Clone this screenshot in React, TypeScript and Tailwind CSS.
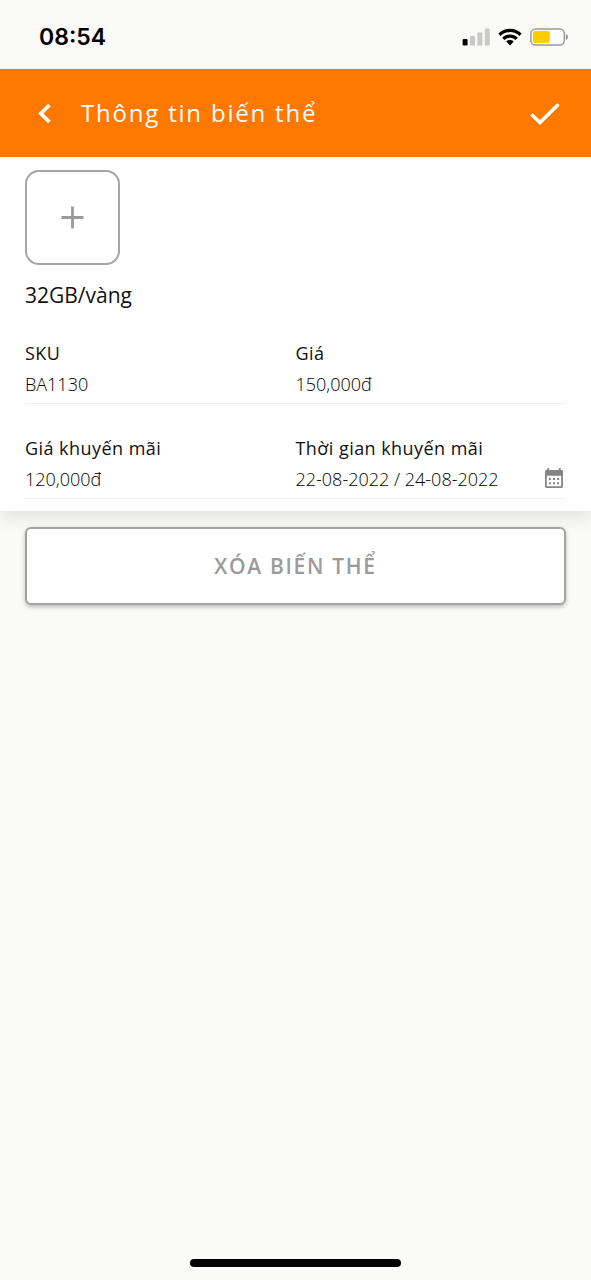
import type { ReactNode } from "react";

function StatusBar() {
  return (
    <div className="flex h-[69px] items-center justify-between pr-[22px] pl-[39px] text-black">
      <time className="pt-1 font-['Inter'] text-[23px] leading-7 font-semibold">08:54</time>
      <div className="flex items-center gap-2 pt-1">
        <svg width="28" height="18" viewBox="0 0 28 18" aria-hidden="true">
          <rect x="0.6" y="11" width="5" height="6.6" rx="1.4" fill="#000" />
          <rect x="8" y="8" width="5" height="9.6" rx="1.2" fill="#c8c8c7" />
          <rect x="15.4" y="4.6" width="5" height="13" rx="1.2" fill="#c8c8c7" />
          <rect x="22.8" y="0.6" width="5" height="17" rx="1.2" fill="#c8c8c7" />
        </svg>
        <svg width="24" height="18" viewBox="0 0 24 18" aria-hidden="true">
          <path d="M.3 5.6a16.8 16.8 0 0 1 23.4 0l-2.2 2.3a13.6 13.6 0 0 0-19 0z" />
          <path d="M4.2 9.7a11.2 11.2 0 0 1 15.6 0l-2.3 2.3a8 8 0 0 0-11 0z" />
          <path d="M8.2 13.6a5.6 5.6 0 0 1 7.6 0L12 17.6z" />
        </svg>
        <svg width="39" height="18" viewBox="0 0 39 18" aria-hidden="true">
          <rect x="0.9" y="0.9" width="33.4" height="16.2" rx="4.6" fill="#fff" stroke="#9b9b9a" strokeWidth="1.5" />
          <rect x="3" y="3" width="16.8" height="12" rx="2.2" fill="#ffcc00" />
          <path d="M35.9 6c1.4.5 2.2 1.6 2.2 3s-.8 2.5-2.2 3z" fill="#9b9b9a" />
        </svg>
      </div>
    </div>
  );
}

function Header() {
  return (
    <header className="flex h-[88px] items-center bg-[#ff7800] pr-[31px] pl-[37px] text-white">
      <button type="button" aria-label="Quay lại" className="flex">
        <svg width="16" height="22" viewBox="0 0 16 22" fill="none" stroke="currentColor" strokeWidth="3.8" aria-hidden="true">
          <path d="M12.4 3 3.9 11.500l8.500 8.500" />
        </svg>
      </button>
      <h1 className="ml-7 flex-1 text-2xl tracking-[0.075em]">Thông tin biến thể</h1>
      <button type="button" aria-label="Lưu" className="flex">
        <svg width="30" height="24" viewBox="0 0 30 24" fill="none" stroke="currentColor" strokeWidth="3.5" aria-hidden="true">
          <path d="m1.500 13.500 8.500 8L28.500 3.300" />
        </svg>
      </button>
    </header>
  );
}

function Field({ id, label, value, children }: { id: string; label: string; value: string; children?: ReactNode }) {
  return (
    <div className="min-w-0">
      <label htmlFor={id} className="block text-lg leading-6 tracking-wide text-[#111111]">
        {label}
      </label>
      <div className="flex h-[39px] items-center border-b border-[#f0f0f0]">
        <input id={id} type="text" defaultValue={value} className="min-w-0 flex-1 bg-transparent text-lg leading-6 font-light text-black outline-none" />
        {children}
      </div>
    </div>
  );
}

function CalendarIcon() {
  return (
    <svg width="20" height="22" viewBox="0 0 20 22" aria-hidden="true">
      <path
        fill="#858585"
        fillRule="evenodd"
        d="M3.3 0h1.8v2h9.8V0h1.8v2h.6C18.5 2 19 2.7 19 3.7v14.5c0 1-.7 1.8-1.7 1.8H2.7C1.7 20 1 19.2 1 18.2V3.7C1 2.7 1.6 2 2.6 2h.7zM2.8 7.8v10.4h14.4V7.800z"
      />
      <path
        fill="#858585"
        d="M4.900 10h2v2h-2zM9 10h2v2H9zM13.100 10h2v2h-2zM4.900 14.200h2v2h-2zM9 14.200h2v2H9zM13.100 14.200h2v2h-2z"
      />
    </svg>
  );
}

export default function App() {
  return (
    <div className="flex min-h-screen flex-col bg-[#fafaf8] font-['Open_Sans','Noto_Sans',sans-serif]">
      <StatusBar />
      <Header />
      <main className="flex-1">
        <section className="bg-white px-[25px] pt-[13px] pb-3 shadow-[0_8px_16px_rgba(0,0,0,0.09)]">
          <button
            type="button"
            aria-label="Thêm ảnh"
            className="flex size-[95px] items-center justify-center rounded-[14px] border-2 border-[#a6a6a6] text-[#9b9b9b]"
          >
            <svg width="24" height="24" viewBox="0 0 24 24" fill="none" stroke="currentColor" strokeWidth="2.8" aria-hidden="true">
              <path d="M11.500 0.500v22M0.500 11.500h22" />
            </svg>
          </button>
          <h2 className="mt-4 text-[21px] leading-7 text-[#111111]">32GB/vàng</h2>
          <form className="mt-8 grid grid-cols-2 gap-y-8">
            <Field id="sku" label="SKU" value="BA1130" />
            <Field id="price" label="Giá" value="150,000đ" />
            <Field id="sale-price" label="Giá khuyến mãi" value="120,000đ" />
            <Field id="sale-period" label="Thời gian khuyến mãi" value="22-08-2022 / 24-08-2022">
              <button type="button" aria-label="Chọn thời gian" className="mr-0.5 flex">
                <CalendarIcon />
              </button>
            </Field>
          </form>
        </section>
        <div className="px-[25px] pt-4">
          <button
            type="button"
            className="relative h-[78px] w-full rounded-md border-2 border-[#a3a3a3] bg-white text-[21px] leading-7 font-semibold tracking-[0.08em] text-[#9b9b9b] shadow-[0_2px_4px_rgba(0,0,0,0.25)]"
          >
            XÓA BIẾN THỂ
          </button>
        </div>
      </main>
      <div className="flex justify-center pb-[13px]">
        <div className="h-2 w-[211px] rounded-full bg-black" />
      </div>
    </div>
  );
}
